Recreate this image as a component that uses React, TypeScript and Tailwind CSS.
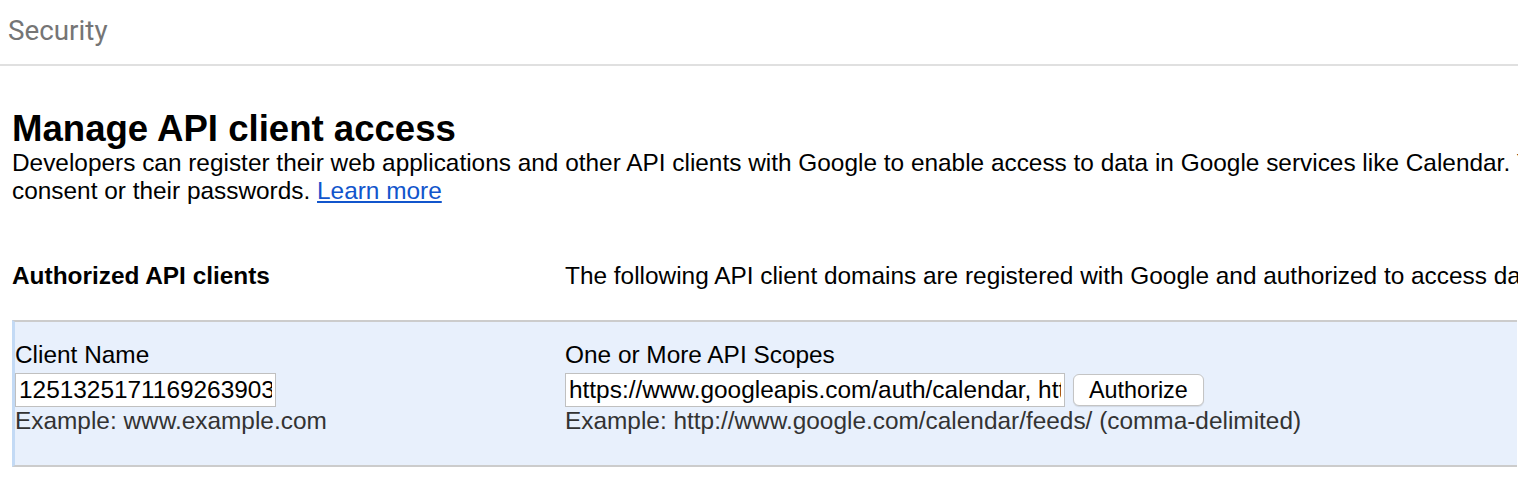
import React from "react";

const sans = "font-['Liberation_Sans',Arial,Helvetica,sans-serif]";

function Field({
  label,
  value,
  width,
  hint,
  children,
}: {
  label: string;
  value: string;
  width: string;
  hint: string;
  children?: React.ReactNode;
}) {
  return (
    <div className="flex flex-col">
      <label className="text-[24.4px] leading-[28px] text-black">{label}</label>
      <div className="mt-[4px] flex items-center gap-[8px]">
        <input
          readOnly
          value={value}
          className={`${width} h-[34px] border border-[#c0c0c0] bg-white px-[3px] text-[24.4px] text-black outline-none ${sans}`}
        />
        {children}
      </div>
      <div className="text-[24.4px] leading-[28px] text-[#333333] whitespace-nowrap">{hint}</div>
    </div>
  );
}

export default function App() {
  return (
    <div className={`w-[1518px] h-[482px] overflow-hidden bg-white text-black ${sans}`}>
      <header className="h-[66px] border-b-2 border-[#e0e0e0] flex items-center pl-[8px]">
        <span className="font-['Roboto',sans-serif] text-[27.8px] text-[#757575] -mt-[2px]">Security</span>
      </header>

      <div className="pl-[12px] pt-[43px]">
        <h1 className="text-[36.6px] leading-[40px] font-bold whitespace-nowrap">Manage API client access</h1>
        <p className="text-[24.4px] leading-[28px] whitespace-nowrap">
          Developers can register their web applications and other API clients with Google to enable access to data in Google
          services like Calendar. You can authorize these registered clients to access your user data without your users having
          to individually give
          <br />
          consent or their passwords.{" "}
          <a href="#" className="text-[#1155cc] underline">
            Learn more
          </a>
        </p>

        <div className="mt-[57px] flex text-[24.4px] leading-[28px] whitespace-nowrap">
          <div className="w-[553px] shrink-0 font-bold">Authorized API clients</div>
          <div>
            The following API client domains are registered with Google and authorized to access data for your users.
          </div>
        </div>

        <div className="mt-[30px] w-[1505px] flex bg-[#e8f0fc] border-y-2 border-[#cccccc] border-l-[3px] border-l-[#c3daf5] pt-[19px] pb-[30px]">
          <div className="w-[550px] shrink-0">
            <Field label="Client Name" value="12513251711692639032" width="w-[261px]" hint="Example: www.example.com" />
          </div>
          <div>
            <Field
              label="One or More API Scopes"
              value="https://www.googleapis.com/auth/calendar, https://www.googleapis.com/auth/drive"
              width="w-[500px]"
              hint="Example: http://www.google.com/calendar/feeds/ (comma-delimited)"
            >
              <button className="h-[32px] px-[15px] rounded-[6px] border border-[#c4c4c4] bg-white text-[23.4px] leading-[28px] text-black shadow-[0_1px_1px_rgba(0,0,0,0.1)]">
                Authorize
              </button>
            </Field>
          </div>
        </div>
      </div>
    </div>
  );
}
